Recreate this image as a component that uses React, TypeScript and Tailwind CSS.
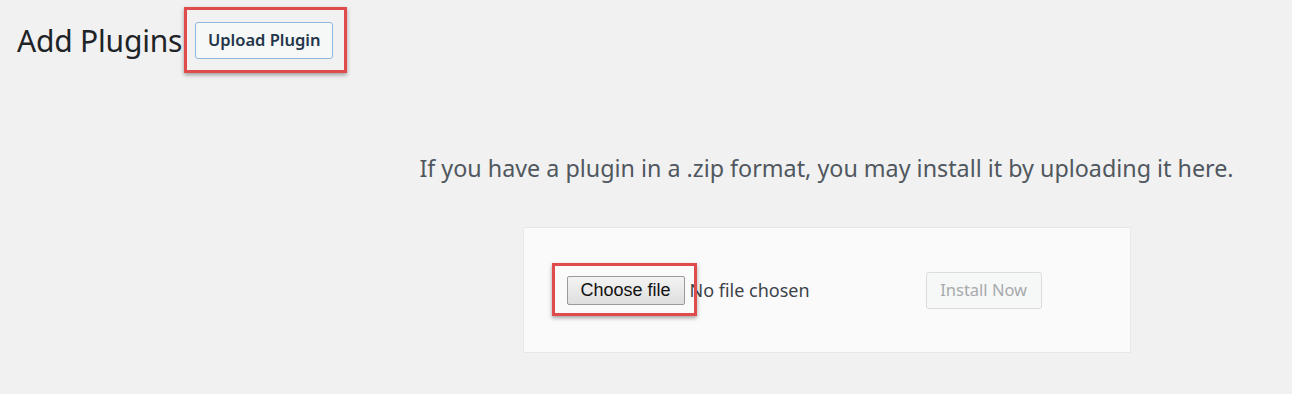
import React from "react";

const sans = "font-['Segoe_UI','Noto_Sans','Open_Sans',sans-serif]";

function Highlight({ children, className }: { children: React.ReactNode; className: string }) {
    return (
        <div className="relative">
            {children}
            {/* annotation box drawn over the control */}
            <div
                className={`pointer-events-none absolute border-[3px] border-[#e04b4b] shadow-[0_2px_4px_rgba(0,0,0,0.35)] ${className}`}
            ></div>
        </div>
    );
}

export default function App() {
    return (
        <div className={`min-h-[394px] w-[1292px] bg-[#f1f1f1] ${sans}`}>
            {/* Heading row */}
            <div className="flex items-center gap-[13px] pl-[17px] pt-[22px]">
                <h1 className="text-[30px] leading-[37px] text-[#1d2327] tracking-[-0.2px]">
                    Add Plugins
                </h1>
                <Highlight className="-left-[11px] -top-[15px] w-[163px] h-[66px]">
                    <button className="h-[37px] w-[138px] rounded-[3px] border border-[#8fb8dc] bg-[#f6f7f7] text-[16.5px] font-semibold text-[#23364a]">
                        Upload Plugin
                    </button>
                </Highlight>
            </div>

            {/* Upload area */}
            <div className="flex flex-col items-center pl-[361px] pt-[94px]">
                <p className="text-[23.3px] leading-[30px] text-[#50575e]">
                    If you have a plugin in a .zip format, you may install it by uploading it here.
                </p>

                <div className="mt-[44px] flex h-[126px] w-[608px] items-center border border-[#e8e8e8] bg-[#fafafa] pl-[43px]">
                    <Highlight className="-left-[15px] -top-[13px] w-[145px] h-[53px]">
                        <div className="flex items-center">
                            <button className="h-[29px] w-[118px] rounded-[2px] border border-[#9a9a9a] bg-gradient-to-b from-[#f4f4f4] to-[#dedede] font-['Liberation_Sans',Arial,sans-serif] text-[18px] text-[#111]">
                                Choose file
                            </button>
                            <span className="ml-[5px] text-[18px] text-[#3c434a]">No file chosen</span>
                        </div>
                    </Highlight>
                    <button className="ml-[116px] h-[37px] w-[116px] rounded-[3px] border border-[#dcdcde] bg-[#f6f7f7] text-[16.5px] text-[#a7aaad]">
                        Install Now
                    </button>
                </div>
            </div>
        </div>
    );
}
